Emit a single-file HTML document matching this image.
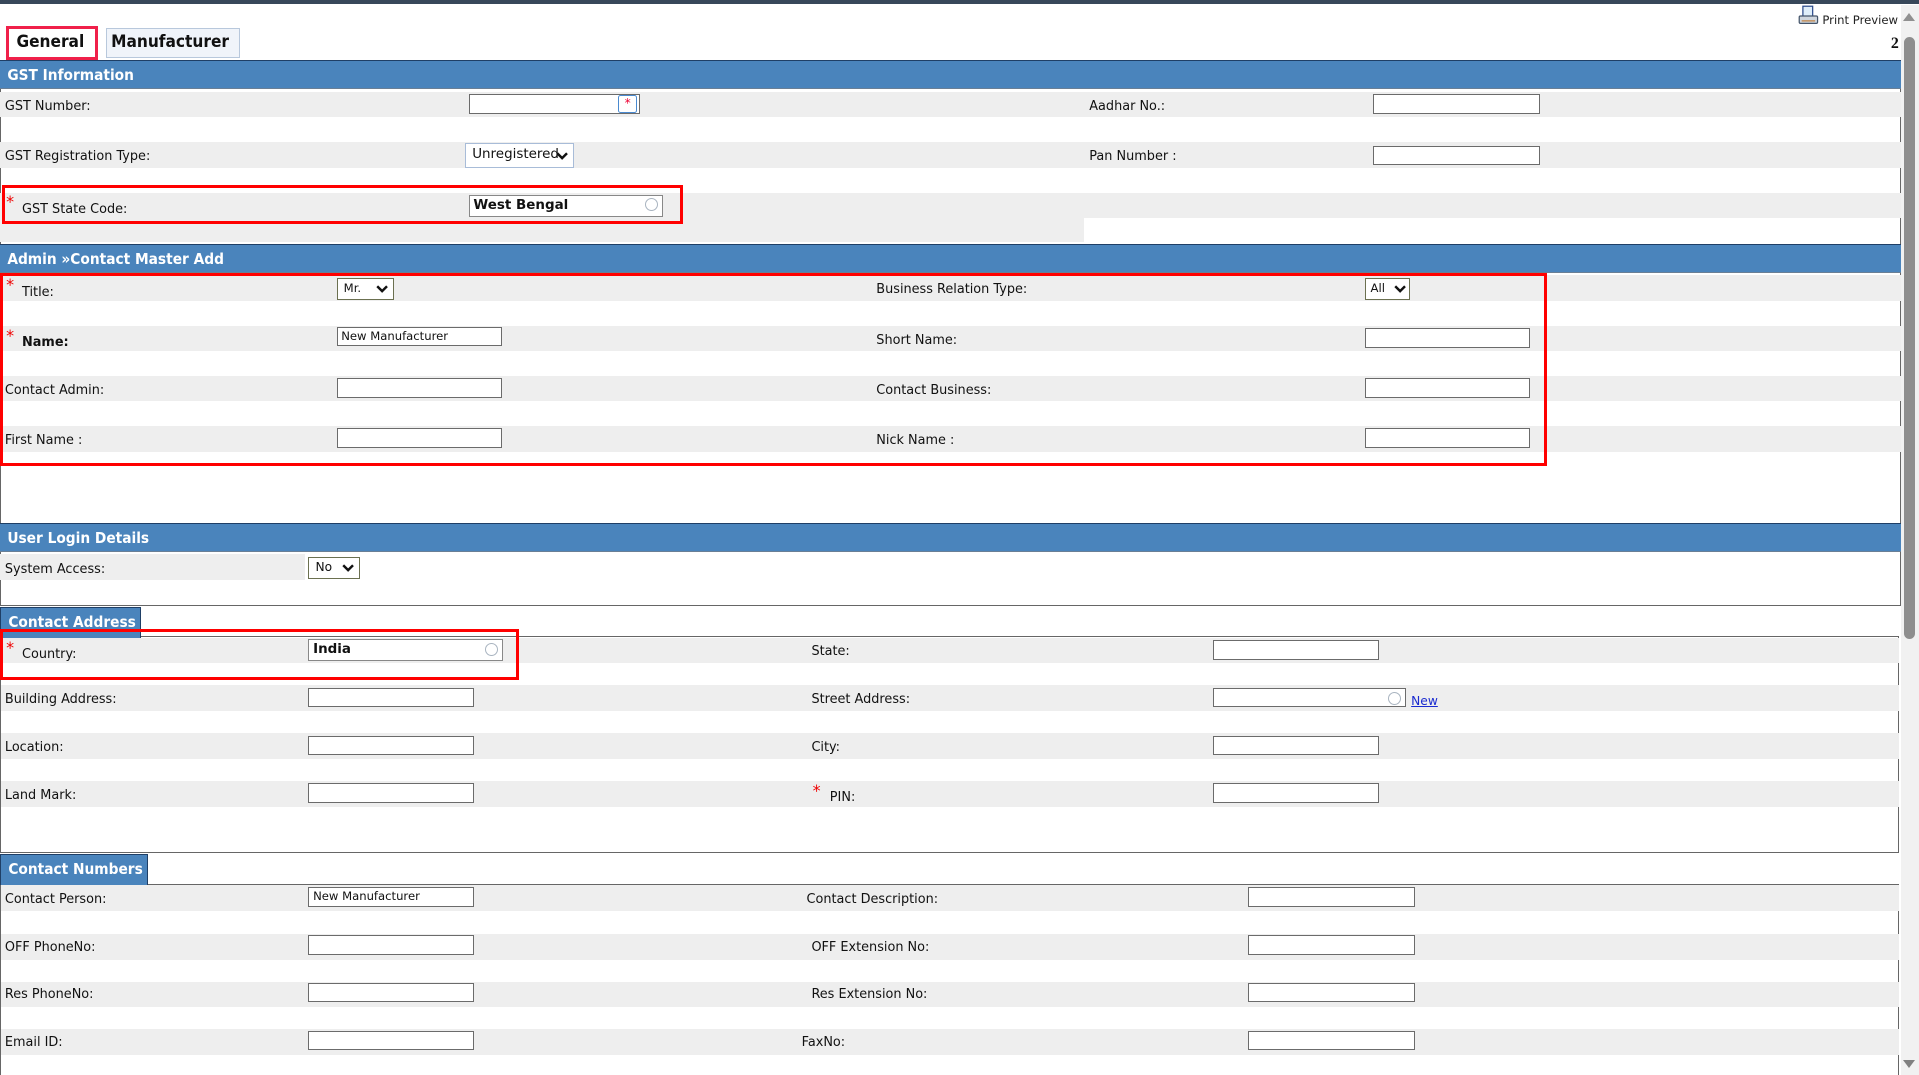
<!DOCTYPE html>
<html><head><meta charset="utf-8"><style>
html,body{margin:0;padding:0;background:#fff;overflow:hidden;width:1919px;height:1075px}
#w{zoom:1.2239;position:relative;width:1568px;height:879px;font-family:"DejaVu Sans","Liberation Sans",sans-serif;font-size:10.5px;color:#111}
.a{position:absolute}
.hd{position:absolute;left:0;width:1553px;height:24px;background:#4a84bc;border-top:1px solid #1f3f66;border-bottom:1px solid #6a7f95;color:#fff;font-weight:bold;font-size:12.5px;line-height:24px;padding-left:6px;box-sizing:border-box;font-family:"DejaVu Sans Condensed","DejaVu Sans",sans-serif}
.g{position:absolute;left:0;width:1553px;height:21px;background:#eeeeee}
.lb{position:absolute;line-height:14px;white-space:nowrap;margin-top:1px}
.in{position:absolute;height:16px;background:#fff;border:1px solid #6b6b6b;box-sizing:border-box;font-size:9.5px;padding-left:3px;line-height:14px}
.sel{position:absolute;height:18px;background:#fff;border:1px solid #6b7050;box-sizing:border-box;font-size:10px;padding-left:5px;line-height:16px}
.sel svg{position:absolute;right:4px;top:5px}
.rb{position:absolute;border:3px solid #f00;box-sizing:border-box}
.st{color:#e00;font-size:13px;position:absolute}
.circ{position:absolute;width:9px;height:9px;border:1.5px solid #a9b4c0;border-radius:50%}
.tab{position:absolute;left:0;height:25px;background:#4a84bc;border:1px solid #1f3f66;border-bottom:none;color:#fff;font-weight:bold;font-size:12.5px;line-height:24px;padding-left:6px;box-sizing:border-box;font-family:"DejaVu Sans Condensed","DejaVu Sans",sans-serif}
</style></head><body><div id="w">
<div class="a" style="left:0;top:0;width:1568px;height:3px;background:#38485a"></div>
<div class="a" style="left:5px;top:21px;width:75px;height:28px;border:3px solid #f0204a;box-sizing:border-box;font-weight:bold;font-size:14px;line-height:22px;padding-left:6px;font-family:'DejaVu Sans Condensed','DejaVu Sans',sans-serif">General</div>
<div class="a" style="left:87px;top:23px;width:109px;height:24px;border:1px solid #b8c8dc;background:#f0f4fa;box-sizing:border-box;font-weight:bold;font-size:14px;line-height:22px;padding-left:3px;font-family:'DejaVu Sans Condensed','DejaVu Sans',sans-serif">Manufacturer</div>
<svg class="a" style="left:1469px;top:4px" width="18" height="17" viewBox="0 0 18 17"><rect x="4" y="1" width="8" height="9" fill="#dfeefa" stroke="#2a4a8a"/><rect x="1" y="9" width="15" height="6" rx="1" fill="#cfd6de" stroke="#44546a"/><line x1="3" y1="13" x2="14" y2="13" stroke="#c08040"/></svg>
<div class="lb" style="left:1489px;top:9px;font-size:9.5px;color:#222">Print Preview</div>
<div class="lb" style="left:1545px;top:28px;font-weight:bold;font-size:13px;font-family:'Liberation Serif',serif">2</div>
<div class="a" style="left:1553px;top:4px;width:15px;height:875px;background:#f1f1f1"></div>
<div class="a" style="left:1556px;top:30px;width:9px;height:492px;background:#8e8e8e;border-radius:5px"></div>
<div class="a" style="left:1555px;top:11px;width:0;height:0;border-left:5px solid transparent;border-right:5px solid transparent;border-bottom:7px solid #909090"></div>
<div class="a" style="left:1555px;top:866px;width:0;height:0;border-left:5px solid transparent;border-right:5px solid transparent;border-top:7px solid #808080"></div>
<div class="a" style="left:0;top:49px;width:1552px;height:445px;border-left:1px solid #666;border-right:1px solid #666;border-bottom:1px solid #666"></div>
<div class="hd" style="top:49px">GST Information</div>
<div class="g" style="top:75px"></div><div class="g" style="top:116px"></div><div class="g" style="top:158px;height:20px"></div>
<div class="a" style="left:0;top:178px;width:886px;height:20px;background:#eeeeee"></div>
<div class="lb" style="left:4px;top:79px">GST Number:</div>
<div class="in" style="left:383px;top:77px;width:140px"></div>
<div class="a" style="left:505px;top:78px;width:14px;height:13px;border:1px solid #4a8ad0;border-radius:2px;color:#e03;font-size:10px;line-height:12px;text-align:center;background:#fff">*</div>
<div class="lb" style="left:890px;top:79px">Aadhar No.:</div>
<div class="in" style="left:1122px;top:77px;width:136px"></div>
<div class="lb" style="left:4px;top:120px">GST Registration Type:</div>
<div class="sel" style="left:380px;top:117px;width:89px;height:20px;border-color:#a8bcd8;font-size:11px;line-height:18px">Unregistered<svg width="10" height="7" viewBox="0 0 10 7" style="top:6px"><path d="M1 1 L5 5 L9 1" fill="none" stroke="#111" stroke-width="2"/></svg></div>
<div class="lb" style="left:890px;top:120px">Pan Number :</div>
<div class="in" style="left:1122px;top:119px;width:136px"></div>
<span class="st" style="left:5px;top:157px">*</span>
<div class="lb" style="left:18px;top:163px">GST State Code:</div>
<div class="in" style="left:383px;top:159px;width:159px;height:18px;border-color:#888;font-weight:bold;font-size:11px;line-height:16px">West Bengal</div>
<div class="circ" style="left:527px;top:162px"></div>
<div class="rb" style="left:2px;top:151px;width:556px;height:32px"></div>
<div class="hd" style="top:199px">Admin »Contact Master Add</div>
<div class="g" style="top:225px"></div><div class="g" style="top:266px"></div><div class="g" style="top:307px"></div><div class="g" style="top:348px"></div>
<span class="st" style="left:5px;top:225px">*</span><div class="lb" style="left:18px;top:231px">Title:</div>
<div class="sel" style="left:275px;top:227px;width:47px;font-size:9.5px">Mr.<svg width="10" height="7" viewBox="0 0 10 7"><path d="M1 1 L5 5 L9 1" fill="none" stroke="#111" stroke-width="2"/></svg></div>
<div class="lb" style="left:716px;top:229px">Business Relation Type:</div>
<div class="sel" style="left:1115px;top:227px;width:37px;font-size:9.5px;padding-left:4px">All<svg width="10" height="7" viewBox="0 0 10 7" style="right:2px"><path d="M1 1 L5 5 L9 1" fill="none" stroke="#111" stroke-width="2"/></svg></div>
<span class="st" style="left:5px;top:266px">*</span><div class="lb" style="left:18px;top:272px;font-weight:bold">Name:</div>
<div class="in" style="left:275px;top:267px;width:135px">New Manufacturer</div>
<div class="lb" style="left:716px;top:270px">Short Name:</div>
<div class="in" style="left:1115px;top:268px;width:135px"></div>
<div class="lb" style="left:4px;top:311px">Contact Admin:</div>
<div class="in" style="left:275px;top:309px;width:135px"></div>
<div class="lb" style="left:716px;top:311px">Contact Business:</div>
<div class="in" style="left:1115px;top:309px;width:135px"></div>
<div class="lb" style="left:4px;top:352px">First Name :</div>
<div class="in" style="left:275px;top:350px;width:135px"></div>
<div class="lb" style="left:716px;top:352px">Nick Name :</div>
<div class="in" style="left:1115px;top:350px;width:135px"></div>
<div class="rb" style="left:0;top:223px;width:1264px;height:158px"></div>
<div class="hd" style="top:427px">User Login Details</div>
<div class="a" style="left:0;top:453px;width:249px;height:21px;background:#eeeeee"></div>
<div class="lb" style="left:4px;top:457px">System Access:</div>
<div class="sel" style="left:252px;top:455px;width:42px">No<svg width="10" height="7" viewBox="0 0 10 7"><path d="M1 1 L5 5 L9 1" fill="none" stroke="#111" stroke-width="2"/></svg></div>
<div class="a" style="left:0;top:520px;width:1552px;height:177px;border:1px solid #666;box-sizing:border-box"></div>
<div class="tab" style="top:496px;width:115px">Contact Address</div>
<div class="g" style="top:521px;width:1551px;left:1px"></div><div class="g" style="top:560px;left:1px;width:1551px"></div><div class="g" style="top:599px;left:1px;width:1551px"></div><div class="g" style="top:638px;left:1px;width:1551px"></div>
<span class="st" style="left:5px;top:521px">*</span><div class="lb" style="left:18px;top:527px">Country:</div>
<div class="in" style="left:252px;top:522px;width:159px;height:18px;border-color:#888;font-weight:bold;font-size:11px;line-height:16px">India</div>
<div class="circ" style="left:396px;top:525px"></div>
<div class="rb" style="left:0;top:514px;width:424px;height:42px"></div>
<div class="lb" style="left:663px;top:524px">State:</div>
<div class="in" style="left:991px;top:523px;width:136px"></div>
<div class="lb" style="left:4px;top:564px">Building Address:</div>
<div class="in" style="left:252px;top:562px;width:135px"></div>
<div class="lb" style="left:663px;top:564px">Street Address:</div>
<div class="in" style="left:991px;top:562px;width:158px"></div>
<div class="circ" style="left:1134px;top:565px"></div>
<div class="lb" style="left:1153px;top:565px;color:#1a2ad0;text-decoration:underline;font-size:10px">New</div>
<div class="lb" style="left:4px;top:603px">Location:</div>
<div class="in" style="left:252px;top:601px;width:135px"></div>
<div class="lb" style="left:663px;top:603px">City:</div>
<div class="in" style="left:991px;top:601px;width:136px"></div>
<div class="lb" style="left:4px;top:642px">Land Mark:</div>
<div class="in" style="left:252px;top:640px;width:135px"></div>
<span class="st" style="left:664px;top:638px">*</span><div class="lb" style="left:678px;top:644px">PIN:</div>
<div class="in" style="left:991px;top:640px;width:136px"></div>
<div class="a" style="left:0;top:722px;width:1552px;height:160px;border-left:1px solid #666;border-right:1px solid #666;border-top:1px solid #666;box-sizing:border-box"></div>
<div class="tab" style="top:698px;width:121px">Contact Numbers</div>
<div class="g" style="top:723px;left:1px;width:1551px"></div><div class="g" style="top:763px;left:1px;width:1551px"></div><div class="g" style="top:802px;left:1px;width:1551px"></div><div class="g" style="top:841px;left:1px;width:1551px"></div>
<div class="lb" style="left:4px;top:727px">Contact Person:</div>
<div class="in" style="left:252px;top:725px;width:135px">New Manufacturer</div>
<div class="lb" style="left:659px;top:727px">Contact Description:</div>
<div class="in" style="left:1020px;top:725px;width:136px"></div>
<div class="lb" style="left:4px;top:766px">OFF PhoneNo:</div>
<div class="in" style="left:252px;top:764px;width:135px"></div>
<div class="lb" style="left:663px;top:766px">OFF Extension No:</div>
<div class="in" style="left:1020px;top:764px;width:136px"></div>
<div class="lb" style="left:4px;top:805px">Res PhoneNo:</div>
<div class="in" style="left:252px;top:803px;width:135px"></div>
<div class="lb" style="left:663px;top:805px">Res Extension No:</div>
<div class="in" style="left:1020px;top:803px;width:136px"></div>
<div class="lb" style="left:4px;top:844px">Email ID:</div>
<div class="in" style="left:252px;top:842px;width:135px"></div>
<div class="lb" style="left:655px;top:844px">FaxNo:</div>
<div class="in" style="left:1020px;top:842px;width:136px"></div>
</div></body></html>
